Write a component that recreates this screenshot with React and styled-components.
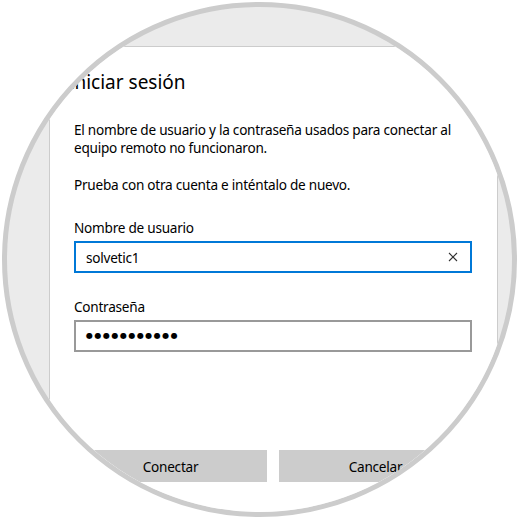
import React from "react";
import styled, { createGlobalStyle } from "styled-components";

const GlobalStyle = createGlobalStyle`
  html, body {
    margin: 0;
    padding: 0;
    background: #ffffff;
  }
  body {
    font-family: "Noto Sans", "Open Sans", sans-serif;
    color: #000000;
  }
`;

const Page = styled.div`
  width: 520px;
  height: 520px;
  overflow: hidden;
  background: #ffffff;
`;

const Lens = styled.div`
  box-sizing: border-box;
  width: 515px;
  height: 515px;
  margin: 2px 0 0 2px;
  border: 5px solid #cccccc;
  border-radius: 50%;
  overflow: hidden;
  background: #ebebeb;
  padding: 39px 0 0 42px;
`;

const Dialog = styled.div`
  box-sizing: border-box;
  width: 449px;
  min-height: 520px;
  background: #ffffff;
  border: 1px solid #cccccc;
  border-bottom: none;
  padding: 21px 25px 0 24px;
  display: flex;
  flex-direction: column;
`;

const Title = styled.h1`
  margin: 0 0 0 -6px;
  font-size: 19px;
  font-weight: 400;
  line-height: 28px;
`;

const Text = styled.p`
  margin: ${(p) => p.$top}px 0 0;
  font-size: 13.6px;
  line-height: 18px;
  letter-spacing: -0.25px;
  white-space: nowrap;
`;

const Label = styled.div`
  margin-top: ${(p) => p.$top}px;
  font-size: 13.6px;
  line-height: 18px;
  letter-spacing: -0.25px;
`;

const Field = styled.div`
  box-sizing: border-box;
  margin-top: 4px;
  height: 32px;
  border: 2px solid ${(p) => (p.$focused ? "#0078d7" : "#999999")};
  display: flex;
  align-items: center;
  padding: 0 10px 0 10px;
`;

const Value = styled.span`
  flex: 1;
  font-size: 13.6px;
  letter-spacing: -0.25px;
`;

const Dots = styled.span`
  flex: 1;
  font-family: "DejaVu Sans", sans-serif;
  font-size: 8px;
  letter-spacing: 1.5px;
  line-height: 1;
`;

const ClearIcon = styled.svg`
  width: 10px;
  height: 10px;
  margin-right: 2px;
`;

const Buttons = styled.div`
  margin-top: 98px;
  display: flex;
  gap: 12px;
`;

const Button = styled.div`
  flex: 1;
  height: 32px;
  background: #cccccc;
  display: flex;
  align-items: center;
  justify-content: center;
  font-size: 13.6px;
  letter-spacing: -0.25px;
`;

export default function App() {
  return (
    <Page>
      <GlobalStyle />
      <Lens>
        <Dialog>
          <Title>Iniciar sesión</Title>
          <Text $top={25}>
            El nombre de usuario y la contraseña usados para conectar al
            <br />
            equipo remoto no funcionaron.
          </Text>
          <Text $top={19}>Prueba con otra cuenta e inténtalo de nuevo.</Text>
          <Label $top={25}>Nombre de usuario</Label>
          <Field $focused>
            <Value>solvetic1</Value>
            <ClearIcon viewBox="0 0 10 10">
              <path d="M1 1 L9 9 M9 1 L1 9" stroke="#333333" strokeWidth="1.1" fill="none" />
            </ClearIcon>
          </Field>
          <Label $top={25}>Contraseña</Label>
          <Field>
            <Dots>●●●●●●●●●●●</Dots>
          </Field>
          <Buttons>
            <Button>Conectar</Button>
            <Button>Cancelar</Button>
          </Buttons>
        </Dialog>
      </Lens>
    </Page>
  );
}
